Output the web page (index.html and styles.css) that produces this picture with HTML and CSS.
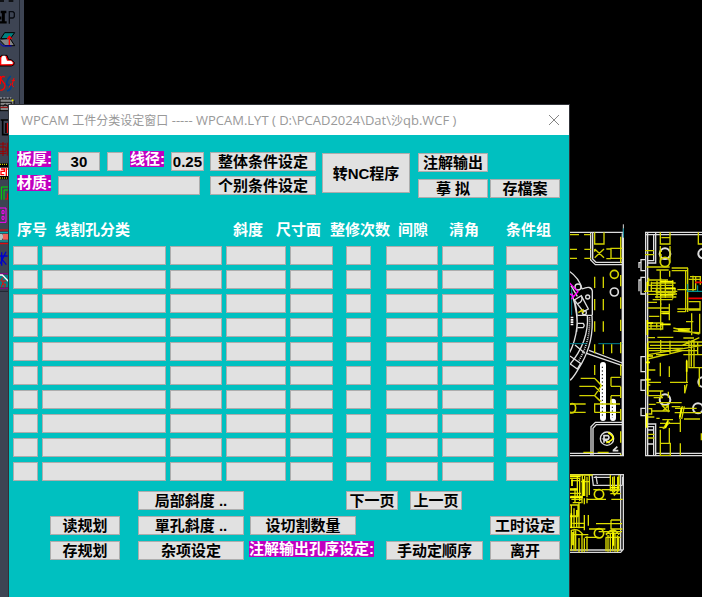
FILE: index.html
```html
<!DOCTYPE html>
<html lang="zh-CN">
<head>
<meta charset="utf-8">
<title>WPCAM</title>
<link rel="stylesheet" href="styles.css">
</head>
<body>
<main class="desktop">
  <aside class="toolbar">
    <svg class="tool-icons" viewBox="0 0 72 900" fill="none" aria-hidden="true">
      <path d="M0 3h12M26 3h14" stroke="#000" stroke-width="5"/>
      <path d="M2 36h17M0 67h20" stroke="#000" stroke-width="7"/>
      <path d="M10 36v30M0 54h4" stroke="#000" stroke-width="9"/>
      <path d="M28 71V35h11l4 4v11l-4 4H28" stroke="#080b12" stroke-width="4"/>
      <path d="M14 98h30L31 116H2z" fill="#008080" stroke="#000" stroke-width="3"/>
      <path d="M0 121l15 16h29L31 117" fill="#858585" stroke="#000" stroke-width="3"/>
      <path d="M0 130l8 8h27" stroke="#00c" stroke-width="3"/>
      <path d="M28 135v-24M22 117l6-8 7 8" stroke="red" stroke-width="4"/>
      <path d="M0 198h34q10-2 9-10l-9-9h-8l-5-13H4l-4 6" fill="red" stroke="#000" stroke-width="3"/>
      <path d="M4 193V173l4-6h8l5 15h12l5 5v5z" fill="#fff"/>
      <path d="M15 231q-12-5-12 7l12 15q1 17-14 18M1 228v25" stroke="red" stroke-width="4"/>
      <path d="M32 228q-12 12-12 25l13 5q0 12-12 15" stroke="#00458b" stroke-width="5"/>
      <path d="M35 241h10M42 234l-6 22 6 5M33 250l-5 12" stroke="red" stroke-width="3"/>
      <path d="M0 297h36l6 5v30H0z" fill="#888" stroke="#000" stroke-width="3"/>
      <path d="M0 307h35v9H0M8 320l8-8 7 8 10-9" stroke="#111" stroke-width="3"/>
      <path d="M1 322h32" stroke="#900" stroke-width="3"/>
      <path d="M0 294h34" stroke="#fff" stroke-width="2" stroke-dasharray="6 4"/>
      <circle cx="38" cy="301" r="3" fill="#ee0"/>
      <path d="M2 360h25M8 360v44h16M18 369v30" stroke="#000" stroke-width="5"/>
      <path d="M22 369v30" stroke="red" stroke-width="3"/>
      <path d="M0 432h18M0 441h18v13H0M0 460h19M9 426v42M22 428v39" stroke="#900" stroke-width="3"/>
      <path d="M0 490h27v48H0z" fill="#000"/>
      <path d="M0 493h27M0 534h27" stroke="#ff0" stroke-width="3" stroke-dasharray="3 3"/>
      <path d="M0 503h27v25H0z" fill="#fff"/>
      <path d="M3 507h10v7H3v10h10M19 504v24M23 508h4" stroke="red" stroke-width="4"/>
      <path d="M4 599v-38h23M12 599v-29h15" stroke="#0d0" stroke-width="3"/>
      <path d="M16 597h11M23 597v-16h4" stroke="red" stroke-width="3"/>
      <path d="M0 624h18v43H0M6 632h6v9H6zM6 649h6v9H6z" stroke="#f0f" stroke-width="3"/>
      <path d="M0 690h27M0 731h27" stroke="red" stroke-width="3"/>
      <path d="M0 698h27M0 723h27" stroke="#00c0c0" stroke-width="3"/>
      <path d="M0 702h7l4 9-6 9H0z" fill="#bbb"/>
      <path d="M9 702h18v17H9z" fill="#f0605a"/>
      <path d="M5 757v40M0 768h23M18 755L1 791M4 776l15 18" stroke="#00c" stroke-width="4"/>
      <path d="M0 821h27M0 865h27" stroke="#900090" stroke-width="3"/>
      <path d="M0 825h27v36H0z" fill="#087f83"/>
      <path d="M0 825h7l18 19" stroke="#fff" stroke-width="4"/>
      <path d="M10 832l-8 10M3 843h15M6 852h10l-2 10M10 844l-6 18" stroke="red" stroke-width="3"/>
      <path d="M0 874h27" stroke="#1f242e" stroke-width="3"/>
    </svg>
  </aside>

  <svg class="drawing" viewBox="0 0 426 1050" fill="none" aria-hidden="true">
    <!-- left plate -->
    <g stroke="#dedede" stroke-width="4">
      <path d="M27 37H190V707H27M27 700H183M187 40V705" />
      <path d="M92 37V120L106 134H187M98 37V117L108 127H187" stroke-width="4"/>
      <path d="M93 706V620L106 607H187M99 706V625L109 614H187" stroke-width="4"/>
      <circle cx="163" cy="216" r="12" stroke-width="5"/>
      <path d="M27 153Q58 174 66 207M66 207Q94 195 97 213V286M82 285Q88 365 27 437M96 287Q102 365 65 430T27 476M43 238Q66 325 27 402M35 218Q57 290 50 335"/>
      <path d="M87 391L187 429M80 400L187 437M52 286H96M43 240L64 227 85 267 70 275zM30 408L62 430 52 447 27 429M45 375L75 400M52 310h17q7 7 0 13H52"/>
      <circle cx="83" cy="231" r="6"/><circle cx="73" cy="278" r="6"/>
      <circle cx="54" cy="201" r="9"/><path d="M33 197L52 229M53 251Q70 244 65 230"/>
      <circle cx="141" cy="656" r="20"/>
      <path d="M132 668V647h12q6 5 0 11h-12l17 11M158 692h17M160 691l12-11" stroke-width="5"/>
    </g>
    <path d="M88 292Q93 360 57 421" stroke="#dedede" stroke-width="5" stroke-dasharray="3 3"/>
    <path d="M129 435V594M159 545V594" stroke="#fff" stroke-width="18" stroke-linecap="round"/>
    <path d="M127 440V594M157 549V594" stroke="#000" stroke-width="3" stroke-dasharray="4 7"/>
    <path d="M36 290v27" stroke="#fff" stroke-width="8" stroke-dasharray="5 2"/>
    <path d="M190 13v26" stroke="#ddd" stroke-width="3"/>
    <path d="M190 25v28M27 371H80M115 371H187M35 205v81" stroke="#007f8f" stroke-width="3"/>
    <path d="M28 188l26 27-20 22M27 220l16 10" stroke="#f0f" stroke-width="4"/>
    <g stroke="#d2d200" stroke-width="4">
      <path d="M27 44h30M72 44h20M27 88h24M73 88h20M27 115h24M73 115h20"/>
      <path d="M104 37V72H132V37M104 87l28 26M132 87l-28 26M104 87v8M187 85H153v30h34M139 87h14M139 116h14M182 50V130"/>
      <path d="M104 170V335M130 170V335M182 165V705" stroke-dasharray="34 33"/>
      <circle cx="163" cy="163" r="12" stroke-width="5"/>
      <path d="M104 373V400M130 373V403M155 373V400M104 435V465"/>
      <path d="M62 475h42l16 16M58 499h46l16 16M58 527h46l16 16M104 475l20 22-20 30 20 18M153 472h29M153 499h29M153 527h29M153 472v27M153 527v27M104 550v28M27 552h50M27 577h50M105 552h75M105 577h75"/>
      <path d="M27 554q20-9 20 10t-20 13" stroke-width="5"/>
      <path d="M145 638q30 18-6 30" stroke="#ff0" stroke-width="5"/>
      <path d="M55 278l16-10M62 270l10 9M70 697h30M113 697h33"/>
    </g>

    <!-- right plate -->
    <g stroke="#dedede" stroke-width="4">
      <path d="M426 37H257V707H426M263 37V705M426 44H257M287 700H426" stroke-width="4"/>
      <path d="M287 37V129H263M281 44V122H263M257 119h-14v33h14M243 128h-6v16M257 172h-14v50h14M243 180h-6v34M257 410h-14v45h14M257 480h-14v31h14M257 565h-14v22h14" stroke-width="4"/>
      <path d="M263 612h24v95M263 620h18v86M263 630h20M263 672h20" />
      <circle cx="315" cy="101" r="16" stroke-width="6"/>
      <circle cx="429" cy="101" r="14" stroke-width="6"/>
      <circle cx="315" cy="539" r="16" stroke-width="6"/>
      <circle cx="430" cy="486" r="15" stroke-width="6"/>
      <circle cx="414" cy="565" r="15" stroke-width="6"/>
    </g>
    <g stroke="#d2d200" stroke-width="4">
      <path d="M301 37V72H330V37M304 53h24M415 37v35h11M301 78v50M330 78v50M255 92h27M255 104h27M298 94h8M298 105h8M260 141h69M289 150h37M335 144h49M335 152h49M383 144V276M377 152V276"/>
      <circle cx="315" cy="126" r="14" stroke-width="5"/>
      <path d="M301 151V210M329 152v18M262 180h62M275 189h72M263 196h78M272 205h74M252 214h100M262 223h83M285 231h64M278 239h60M291 183v52M302 174v82M316 180v54M338 181v55M323 222h28"/>
      <path d="M289 206h56v12h-56zM266 173v22M274 185v29M352 209h53M390 170h31v24M386 178h35M399 167v46M407 171v40M386 245h34v25h-34M352 267h67M352 275h25"/>
      <path d="M263 247h28M263 264h65M267 289h31M302 249v82M328 251v50M301 275h27M300 280h25"/>
      <path d="M263 309h45v18h-45M265 318h40M273 310v17M290 309v14M340 324l78 18M340 333l77 5M346 326h45M395 280v66M263 353h22M292 352h48M370 354h32M419 281v60M400 305h-22"/>
      <path d="M263 366h163M270 376h156M263 385h106M267 392h147M265 404l161-28M263 417l105-25M288 404h35M370 404h56M365 377l53-24M302 360v44M330 362v40M387 361v81M394 361v79M402 362v80M413 367v38"/>
      <path d="M380 419v70M374 495v25l7-28M385 443h41M301 428v41M328 439v32M263 450h23M263 487h40M330 487h54M263 495h8M267 513h43M263 527h47M281 533h28M302 515v21M325 515v18M418 442v58"/>
      <path d="M266 553h21M289 548h76M265 566h10v16h-10M274 573h56M345 565h65M344 578h80M263 591h20M289 595h10M307 599h32M372 597h48M361 596v40M307 557l17 17M325 557l-18 17M305 557h20v20M367 558l-8 39M373 559l-8 38M325 600l-16 27M329 606l-16 20M298 622h16M301 629V670M328 624v46M301 670h30v36h-30zM361 670v36M263 643h20M263 654h20M424 640v21M335 560h26M300 610h61"/>
    </g>
    <g stroke="#ff0" stroke-width="5">
      <path d="M262 185v29M301 185h39M317 205h29M300 225h40M262 300v45M263 309h16M300 313h32M354 330h35M263 368v156M265 408h14M257 427h13M258 479h14M260 580v43M380 422v33M365 562l-6 30M324 602l-8 22M307 280h20"/>
    </g>
    <path d="M405 187h21M385 235h41" stroke="#f00000" stroke-width="5"/>
    <path d="M383 192v24M383 214h43M413 196v18" stroke="#00a7ab" stroke-width="3"/>

    <!-- lower plate -->
    <g stroke="#d8d8d8" stroke-width="4">
      <path d="M27 764H190V988L182 997H27M182 765V988M27 990H187" stroke-width="4"/>
      <path d="M96 764l4 32h88M108 768l4 24M101 772h52M188 770v24"/>
    </g>
    <g stroke="#dfdf00" stroke-width="4">
      <path d="M27 765H98M30 775h31M34 782h26M52 768v62M59 773v70M67 765v70M74 768v60M81 770v62M88 765v60M63 785h23M27 810h25M100 809h18M125 809h55M28 820h35M31 829h35M34 838h32M38 848h26M45 805v42"/>
      <circle cx="117" cy="823" r="14" stroke-width="5"/>
      <circle cx="117" cy="940" r="14" stroke-width="5"/>
      <path d="M151 765v47h26v-47M158 770v45l5 10 10-10v-45M163 769v48M151 821h31M83 838h55M154 838h34M27 855h27v33H27M34 856v67M42 865v60M50 870v54M57 845v80M73 885v46M66 830v20M81 835v15M85 885v32M27 890h27M37 910h38M28 922h46M108 911h78M153 900h29M153 900v27M87 927h49M152 927h35M74 952h42M116 935h70M73 835v18"/>
      <path d="M27 950v43M34 930v63M42 929v64M47 930v63M57 954v43M66 939v58M73 955v40M81 949v45M34 931q20-8 35 13M44 944h41M137 940h44M137 952h45M138 952v42M144 945v50M151 940v55M158 932v62M165 940v55M172 946v50M176 949v45M138 945q22-30 39 0"/>
    </g>
    <path d="M27 769h35M36 778v20M71 778v50M28 807h25M29 832h38M34 880v45M39 936v40M160 937v40M152 803h25" stroke="#ff0" stroke-width="5"/>
  </svg>

  <section class="dialog" role="dialog" aria-labelledby="window-title">
    <header class="titlebar">
      <h1 id="window-title">WPCAM <span class="han">工件分类设定窗口</span> ----- WPCAM.LYT ( D:\PCAD2024\Dat\<span class="han">沙</span>qb.WCF )</h1>
      <button class="close" aria-label="关闭"><svg viewBox="0 0 12 12" fill="none" aria-hidden="true"><path d="M1 1l10 10M11 1L1 11" stroke="#858585"/></svg></button>
    </header>

    <form class="content">
      <div class="settings">
        <div class="fields">
          <div class="field-row dimensions">
            <label class="tag" for="thick">板厚:</label>
            <input id="thick" class="control" value="30">
            <button type="button" class="control" aria-label="选择板厚"></button>
            <label class="tag" for="wire">线径:</label>
            <input id="wire" class="control" value="0.25">
          </div>
          <div class="field-row material">
            <label class="tag" for="material">材质:</label>
            <input id="material" class="control">
          </div>
        </div>
        <div class="conditions">
          <button type="button" class="control">整体条件设定</button>
          <button type="button" class="control">个别条件设定</button>
        </div>
        <button type="button" class="control convert">转NC程序</button>
        <div class="outputs">
          <button type="button" class="control">注解输出</button>
          <button type="button" class="control simulate">摹 拟</button>
          <button type="button" class="control">存檔案</button>
        </div>
      </div>

      <table class="holes">
        <thead>
          <tr><th>序号</th><th>线割孔分类</th><th></th><th>斜度</th><th>尺寸面</th><th>整修次数</th><th>间隙</th><th>清角</th><th>条件组</th></tr>
        </thead>
        <tbody id="hole-rows"></tbody>
      </table>

      <div class="actions">
        <div class="action-row first">
          <button type="button" class="control">局部斜度 ..</button>
          <button type="button" class="control next">下一页</button>
          <button type="button" class="control previous">上一页</button>
        </div>
        <div class="action-row second">
          <button type="button" class="control">读规划</button>
          <button type="button" class="control taper">單孔斜度 ..</button>
          <button type="button" class="control count">设切割数量</button>
          <button type="button" class="control last">工时设定</button>
        </div>
        <div class="action-row third">
          <button type="button" class="control">存规划</button>
          <button type="button" class="control taper">杂项设定</button>
          <span class="tag">注解输出孔序设定:</span>
          <button type="button" class="control manual">手动定顺序</button>
          <button type="button" class="control last">离开</button>
        </div>
      </div>
    </form>
  </section>
</main>
<script src="rows.js"></script>
</body>
</html>
```
FILE: styles.css
```css
* {
  box-sizing: border-box;
}

body {
  margin: 0;
  background: #000;
  font-family: "Liberation Sans", "Noto Sans CJK SC", sans-serif;
}

.desktop {
  position: relative;
  display: flex;
  min-height: 100vh;
  overflow: hidden;
}

.toolbar {
  width: 24px;
  background: linear-gradient(to right, #3d4453 19px, #202631 19px, #202631 20px, #3d4453 20px);
}

.tool-icons {
  display: block;
  width: 24px;
}

.drawing {
  position: absolute;
  top: 220px;
  right: 0;
  width: 142px;
}

.dialog {
  position: absolute;
  top: 105px;
  right: 133px;
  bottom: 0;
  left: 9px;
  background: #00c0c0;
  box-shadow: 0 0 0 1px #303238;
}

.titlebar {
  display: flex;
  align-items: center;
  justify-content: space-between;
  height: 30px;
  padding: 0 9px 0 12px;
  background: #fff;
}

.titlebar h1 {
  margin: 0;
  color: #999;
  font: 400 13px/30px "Open Sans", "Noto Sans CJK SC", sans-serif;
  white-space: nowrap;
}

.titlebar .han {
  font-size: 12px;
}

.close {
  display: flex;
  padding: 0;
  border: 0;
  background: none;
}

.close svg {
  width: 12px;
  height: 12px;
}

.content {
  padding: 16px 9px 0 4px;
}

.control {
  min-width: 0;
  width: 100%;
  height: 19px;
  padding: 0;
  border: 1px solid #adadad;
  border-radius: 0;
  background: #e1e1e1;
  color: #000;
  font: 700 15px/17px "Liberation Sans", "Noto Sans CJK SC", sans-serif;
  text-align: center;
  white-space: nowrap;
}

.tag {
  height: 16px;
  background: #c000c0;
  color: #fff;
  font-size: 15px;
  font-weight: 700;
  line-height: 16px;
  white-space: nowrap;
}

.settings {
  display: grid;
  grid-template-columns: 187fr 106fr 88fr 144fr;
  column-gap: 6px;
  align-items: start;
  padding-left: 4px;
}

.fields {
  display: grid;
  gap: 4px;
}

.field-row {
  display: grid;
  height: 20px;
}

.field-row .control {
  align-self: end;
}

.dimensions {
  grid-template-columns: 34px 43fr 16px 34px 34fr;
  column-gap: 7px;
}

.material {
  grid-template-columns: 34px 1fr;
  column-gap: 7px;
  padding-right: 4px;
}

.conditions {
  display: grid;
  gap: 5px;
  padding-top: 1px;
}

.convert {
  height: 40px;
  margin-top: 2px;
}

.outputs {
  display: grid;
  grid-template-columns: 1fr 1fr;
  gap: 7px 2px;
  padding: 2px 0 0 2px;
}

.simulate {
  grid-column: 1;
}

.holes,
.holes thead,
.holes tbody {
  display: block;
}

.holes {
  margin-top: 24px;
}

.holes tr {
  display: grid;
}

.holes thead tr {
  grid-template-columns: 38fr 160fr 18fr 43fr 54fr 68fr 51fr 57fr 54fr;
  padding-left: 4px;
  margin-bottom: 8px;
}

.holes th {
  min-width: 0;
  padding: 0;
  color: #fff;
  font-size: 15px;
  line-height: 16px;
  text-align: left;
  white-space: nowrap;
}

.holes tbody tr {
  grid-template-columns: 25fr 124fr 52fr 60fr 52fr 36fr 52fr 60fr 54fr;
  column-gap: 4px;
  margin-bottom: 5px;
}

.holes td {
  display: flex;
  min-width: 0;
  padding: 0;
}

.holes td:nth-child(5) {
  padding-right: 9px;
}

.holes td:nth-child(6) {
  padding-right: 11px;
}

.holes td:nth-child(8) {
  padding-right: 8px;
}

.holes td:nth-child(9) {
  padding-right: 2px;
}

.actions {
  display: grid;
  gap: 6px;
  margin-top: 9px;
}

.action-row {
  display: grid;
  padding-left: 37px;
}

.first {
  grid-template-columns: 106fr 102fr 52fr 12fr 52fr 98fr;
  align-items: end;
  height: 20px;
  padding-left: 125px;
}

.next {
  grid-column: 3;
}

.previous {
  grid-column: 5;
}

.second {
  grid-template-columns: 70fr 18fr 106fr 6fr 106fr 134fr 70fr;
}

.third {
  grid-template-columns: 70fr 18fr 106fr 5fr 125fr 12fr 97fr 7fr 70fr;
}

.taper {
  grid-column: 3;
}

.count,
.third .tag {
  grid-column: 5;
}

.manual {
  grid-column: 7;
}

.last {
  grid-column: -2;
}
```
FILE: rows.js
```js
const body = document.getElementById("hole-rows");
const columns = ["序号", "线割孔分类", "分类值", "斜度", "尺寸面", "整修次数", "间隙", "清角", "条件组"];

for (let row = 1; row <= 10; row += 1) {
  const tr = document.createElement("tr");
  for (const name of columns) {
    const td = document.createElement("td");
    const input = document.createElement("input");
    input.className = "control";
    input.setAttribute("aria-label", `${name} ${row}`);
    td.append(input);
    tr.append(td);
  }
  body.append(tr);
}
```
